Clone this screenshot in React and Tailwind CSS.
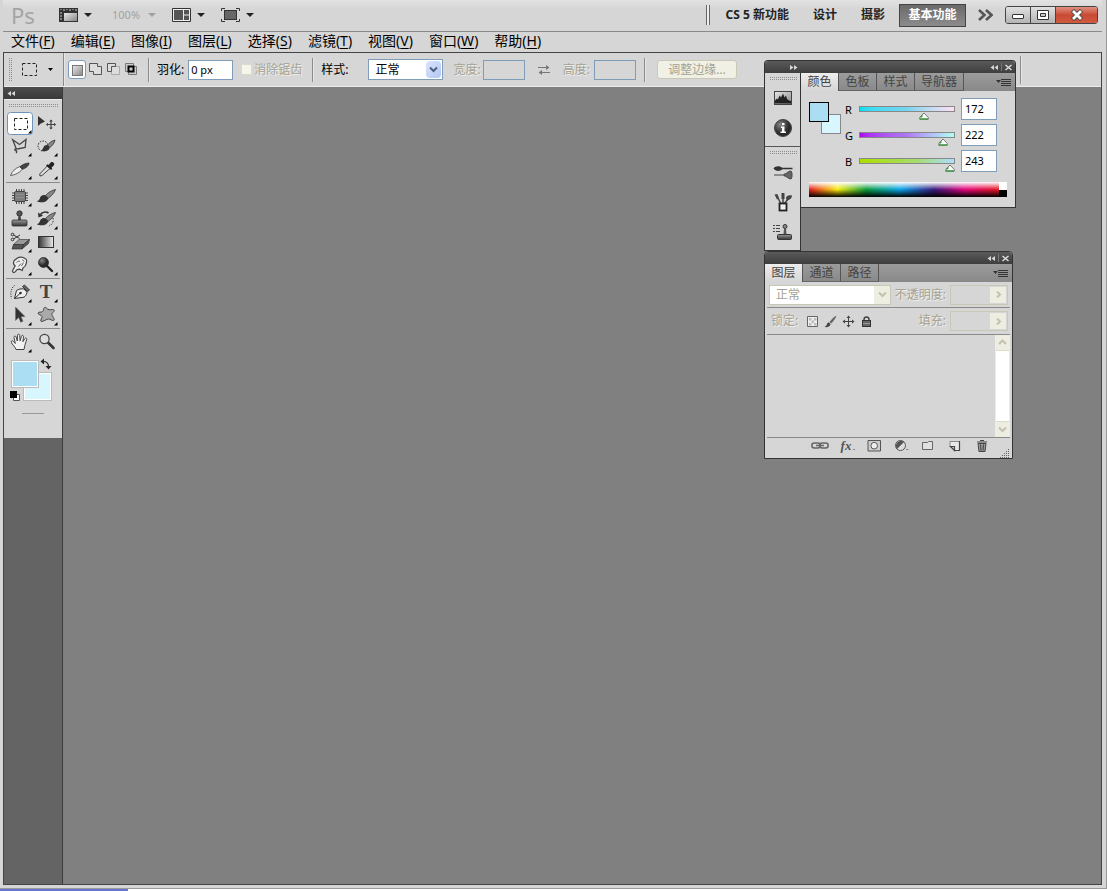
import { useState } from "react";
import clsx from "clsx";

const MENUS = [
  ["文件", "F"],
  ["编辑", "E"],
  ["图像", "I"],
  ["图层", "L"],
  ["选择", "S"],
  ["滤镜", "T"],
  ["视图", "V"],
  ["窗口", "W"],
  ["帮助", "H"],
];

/* ---------- small shared pieces ---------- */

function Caret({ className = "fill-[#222]" }) {
  return (
    <svg className={clsx("h-1 w-2 shrink-0", className)} viewBox="0 0 8 4" aria-hidden="true">
      <path d="M0 0h8L4 4z" />
    </svg>
  );
}

function Divider({ className }) {
  return <span className={clsx("w-px shrink-0 bg-[#8a8a8a] shadow-[1px_0_0_#e6e6e6]", className)} />;
}

// Dotted drag handle
function Grip({ className }) {
  return (
    <span
      className={clsx("shrink-0 bg-[conic-gradient(#8c8c8c_25%,transparent_0)] bg-[size:2px_2px]", className)}
    />
  );
}

function Chevron({ className, dir = "down" }) {
  const paths = { down: "M1 1.5l3.5 3.5L8 1.5", up: "M1 5l3.5-3.5L8 5", right: "M3 .5L6 3.5L3 6.5" };
  return (
    <svg className={clsx("h-[7px] w-[9px]", className)} viewBox="0 0 9 7" fill="none" strokeWidth="2" aria-hidden="true">
      <path d={paths[dir]} />
    </svg>
  );
}

/* ---------- brush shape, reused by several tools ---------- */

function BrushShape() {
  return (
    <g>
      <path d="M22.500 4.500c-3.500.8-7.500 3-10 6l2.800 2.700c3-2 6-5.200 7.200-8.700z" fill="#888" stroke="#333" strokeWidth=".8" />
      <path d="M12.200 10.200c-3-.6-4.700 1-5.200 2.800-.4 1.500-1.500 2.800-3.200 3.200 3.500 2 10.300 1.500 11.500-3z" fill="#333" />
    </g>
  );
}

function StampShape() {
  return (
    <g>
      <circle cx="12.500" cy="5.500" r="2.700" fill="#555" stroke="#222" strokeWidth=".7" />
      <path d="M11.500 8h2l.6 4h-3.200z" fill="#444" />
      <rect x="5" y="12" width="15" height="6" rx="1" fill="url(#metal)" stroke="#333" strokeWidth=".8" />
    </g>
  );
}

/* ---------- toolbox icons, drawn on a 26x23 cell ---------- */

const TOOL_ICONS = {
  marquee: <rect x="7.500" y="6.500" width="13" height="11" fill="none" stroke="#222" strokeDasharray="3 2" />,
  move: (
    <g>
      <path d="M5 4v10l2.500-2.300L12 9.500z" fill="#333" />
      <path d="M18 8v9M13.500 12.500h9" stroke="#444" strokeWidth="1.200" />
      <path d="M16.200 9.500L18 7.500l1.800 2zM16.200 15.500l1.800 2 1.800-2zM15 10.700l-2 1.800 2 1.800zM21 10.700l2 1.800-2 1.800z" fill="#444" />
    </g>
  ),
  lasso: (
    <g fill="none" stroke="#444" strokeWidth="1.300">
      <path d="M9.500 14.500L5.700 4.700l6.800 4.800 6.500-5-.8 8-8 1.500" />
      <path d="M9.800 14.200c-1.800-.9-3 .8-1.200 1.300 1.200.3 1.700 1.200.5 2.500" />
    </g>
  ),
  quickSelect: (
    <g>
      <circle cx="10" cy="11" r="5" fill="none" stroke="#222" strokeDasharray="1.500 1.300" />
      <path d="M22 5c-3 .8-6 3-7.500 5l2.300 2.500c2.700-2 4.700-4.500 5.200-7.500z" fill="#888" stroke="#333" strokeWidth=".8" />
      <path d="M14.500 10c-3-.2-4 1.800-4.500 3.200-.3 1-1 1.800-2.200 2 3 2 8.500 1.300 9-2.700z" fill="#333" />
    </g>
  ),
  slice: (
    <g>
      <path d="M3.500 17.500c1.500-4 5-7.500 9.200-8.800l2.600 2.600c-3 3.500-7 5.700-11.800 6.200z" fill="#eee" stroke="#555" strokeWidth=".9" />
      <path d="M13 8.500c2.500-2 5.500-3.300 9-3.500.2 2.500-2.700 5-6.500 6.300z" fill="#444" stroke="#222" strokeWidth=".6" />
    </g>
  ),
  eyedropper: (
    <g>
      <path d="M7 18l-.3-2 7.600-8 2.700 2.500-8 7z" fill="#ddd" stroke="#333" strokeWidth=".9" />
      <path d="M13 7.500l1.400-1.300 1.100.9 2.200-2.600c1.500-1.600 4.600.8 3.200 2.700l-2.400 2.500.8 1-1.200 1.300z" fill="#222" />
    </g>
  ),
  patch: (
    <g>
      <path
        d="M9.500 4v15M12 4v15M14.500 4v15M17 4v15M5 8h16M5 10.500h16M5 13h16M5 15.500h16"
        stroke="#333"
        strokeWidth=".9"
      />
      <rect x="7.500" y="6.500" width="11" height="10" rx="1.500" fill="#7c7c7c" stroke="#444" />
      <path d="M9 9.500h8M9 12.500h8" stroke="#8e8e8e" />
    </g>
  ),
  brush: <BrushShape />,
  stamp: <StampShape />,
  historyBrush: (
    <g>
      <BrushShape />
      <path d="M7.500 6.500c2-2.500 5.500-3 8-1.500" fill="none" stroke="#333" strokeWidth="1.700" />
      <path d="M5 4.500l.5 5 4.500-1.800z" fill="#333" />
      <path d="M20 10c1 3-.5 6.500-4 8" fill="none" stroke="#333" strokeDasharray="1.500 1.500" />
    </g>
  ),
  eraser: (
    <g>
      <path d="M6.500 13.500l5.500-5h10.500l-6 5z" fill="#999" stroke="#444" strokeWidth=".7" />
      <path d="M6.500 13.500l-1.500 4.500h10l1.500-4.500zM15 18l6.500-5.500 1-4-6 5z" fill="#555" stroke="#333" strokeWidth=".7" />
      <path d="M6.500 4l6 3.500M6.500 8L13 4" stroke="#333" strokeWidth="1" />
      <circle cx="5.500" cy="3.500" r="1.300" fill="none" stroke="#333" />
      <circle cx="5.500" cy="8.500" r="1.300" fill="none" stroke="#333" />
    </g>
  ),
  gradient: <rect x="5.500" y="5.500" width="15" height="11" fill="url(#ramp)" stroke="#333" />,
  smudge: (
    <g>
      <path
        d="M6.200 18.300c-.8-.4-.8-1.300-.4-2.100l2.300-4.400C6.500 10.500 6 8.500 7.300 6.500L10.500 4c2-1.300 5.500-1 7 .3 2 .6 2.500 2.500 1.900 4.500-.4 2.500-1.500 4.200-3.400 5.200l-.8 2.500-2.700-1.300-2.300.3-2.400 2.600c-.5.5-1.100.5-1.600.2z"
        fill="#ececec"
        stroke="#444"
        strokeWidth="1.200"
      />
      <path d="M9.500 8.500c1-1.200 2.200-1.700 3.500-1.200M14 9.500l-2.500 3M16.500 8.500L14.500 12M15 6c1.300 0 2 .5 2 1.500" fill="none" stroke="#666" />
    </g>
  ),
  dodge: (
    <g>
      <path d="M13.500 11.500l5.500 5.500" stroke="#222" strokeWidth="2.400" strokeLinecap="round" />
      <circle cx="10.500" cy="8.500" r="5" fill="url(#ball)" stroke="#222" strokeWidth=".7" />
    </g>
  ),
  pen: (
    <g>
      <path d="M7.500 17.500l2-8c2-1.500 5-2 7.500-1.500l3 3.200c-.5 2.500-1.500 4-3 5z" fill="#eee" stroke="#333" strokeWidth="1" />
      <path d="M7.500 17.500l5.500-5" stroke="#333" />
      <circle cx="13.500" cy="12" r="1.300" fill="#333" />
      <path d="M15.500 5.500l2-1.500 5 5-2 1.500z" fill="#666" stroke="#222" strokeWidth=".8" />
      <path d="M7.500 4.500c-3 2-4.500 7.500-3 13" fill="none" stroke="#222" strokeDasharray="1 1.300" />
    </g>
  ),
  type: (
    <text x="13" y="17" textAnchor="middle" className="fill-[#444] font-['Liberation_Serif',serif] text-[19px] font-bold">
      T
    </text>
  ),
  pathSelect: (
    <path d="M8.500 3v13.500l3.200-3 2 4.700 2.300-1-2-4.500 4-.2z" fill="#333" stroke="#666" strokeWidth=".5" />
  ),
  shape: (
    <path
      d="M11.500 3.500c1.500-1 2.500 2 4.500 2.200 2 .3 5-.9 5.300.6.2 1.500-2.800 2.700-2.500 4.200.3 2 3.500 4.500 2 5.800-1.300 1-3.500-1.500-5.500-1.300-2.300.3-6 3.300-7.300 2.300-1.300-1 1.500-3.300 1-5-.5-1.500-4.200-1.500-4-3.300.3-1.500 3.500-.3 4.700-1.500 1-1 .7-3.300 1.800-4z"
      fill="#aaa"
      stroke="#444"
    />
  ),
  hand: (
    <path
      d="M9 18.500c-.5-2.500-4-5-4.700-7.200-.4-1.500 1.200-2 2.200-.8l1.800 2L7 6.500c-.2-1.700 1.700-2 2.200-.5l1.100 4 .2-5.700c.1-1.500 2-1.500 2.200 0l.4 5.500 1.300-4.600c.4-1.400 2.200-1 2.100.5l-.6 5 1.900-3c.8-1.300 2.300-.6 1.900.8-.7 2.600-1.700 4.500-1.900 6.200l-.8 3.800z"
      fill="#f2f2f2"
      stroke="#444"
      strokeWidth="1"
    />
  ),
  zoom: (
    <g>
      <path d="M15 11.500l5.500 5.500" stroke="#333" strokeWidth="2.600" strokeLinecap="round" />
      <circle cx="11.500" cy="8" r="4.600" fill="#ddd" stroke="#444" strokeWidth="1.300" />
    </g>
  ),
};

const TOOL_GROUPS = [
  [
    ["marquee", "矩形选框工具", true],
    ["move", "移动工具", false],
    ["lasso", "多边形套索工具", true],
    ["quickSelect", "快速选择工具", true],
    ["slice", "切片工具", true],
    ["eyedropper", "吸管工具", true],
  ],
  [
    ["patch", "修补工具", true],
    ["brush", "画笔工具", true],
    ["stamp", "仿制图章工具", true],
    ["historyBrush", "历史记录画笔工具", true],
    ["eraser", "橡皮擦工具", true],
    ["gradient", "渐变工具", true],
    ["smudge", "涂抹工具", true],
    ["dodge", "减淡工具", true],
  ],
  [
    ["pen", "钢笔工具", true],
    ["type", "文字工具", true],
    ["pathSelect", "路径选择工具", true],
    ["shape", "自定形状工具", true],
  ],
  [
    ["hand", "抓手工具", true],
    ["zoom", "缩放工具", false],
  ],
];

// Gradients referenced by id from several icons
function SharedDefs() {
  return (
    <svg className="absolute h-0 w-0" aria-hidden="true">
      <defs>
        <linearGradient id="metal" x2="0" y2="1">
          <stop stopColor="#999" />
          <stop offset="1" stopColor="#333" />
        </linearGradient>
        <linearGradient id="ramp">
          <stop stopColor="#333" />
          <stop offset="1" stopColor="#eee" />
        </linearGradient>
        <radialGradient id="ball" cx=".35" cy=".3">
          <stop stopColor="#888" />
          <stop offset="1" stopColor="#2a2a2a" />
        </radialGradient>
        <linearGradient id="steel" x2="1" y2="1">
          <stop stopColor="#e8e8e8" />
          <stop offset="1" stopColor="#888" />
        </linearGradient>
      </defs>
    </svg>
  );
}

/* ---------- title bar ---------- */

function TitleBar() {
  return (
    <header className="flex h-8 items-center border-b border-[#8a8a8a] bg-gradient-to-b from-[#e2e2e2] to-[#d6d6d6] to-30% pb-px pl-2 pr-1">
      <span className="w-12 text-[22px] leading-6 text-[#a4a4a4]">Ps</span>
      <button type="button" aria-label="启动 Bridge" className="flex items-center gap-1.5">
        <svg className="h-4 w-[19px]" viewBox="0 0 19 16" aria-hidden="true">
          <path d="M0 1h19v14H0z" fill="#333" />
          <path d="M5 6h13v8H5z" fill="url(#steel)" />
          <path d="M2 2v1M5 2v2M8 2v1M11 2v2M14 2v1M17 2v2M1 6h2M1 9h2M1 12h2" stroke="#ccc" />
        </svg>
        <Caret />
      </button>
      <button type="button" disabled className="ml-5 flex items-center gap-2 text-[11px] leading-4 text-[#a2a2a2]">
        100%
        <Caret className="fill-[#a2a2a2]" />
      </button>
      <button type="button" aria-label="排列文档" className="ml-4 flex items-center gap-1.5">
        <svg className="h-4 w-[19px]" viewBox="0 0 19 16" aria-hidden="true">
          <path d="M.5 1.500h18v13H.5z" fill="#eee" stroke="#333" />
          <path d="M2 3h9v10H2zM12 3h5v4.500h-5zM12 8.500h5V13h-5z" fill="#555" />
        </svg>
        <Caret />
      </button>
      <button type="button" aria-label="屏幕模式" className="ml-4 flex items-center gap-1.5">
        <svg className="h-4 w-[19px]" viewBox="0 0 19 16" aria-hidden="true">
          <path d="M.5 4V1.500H4M15 1.500h3.500V4M18.500 12v2.500H15M4 14.500H.5V12" fill="none" stroke="#333" />
          <rect x="3.500" y="3.500" width="12" height="9" fill="#666" stroke="#333" />
        </svg>
        <Caret />
      </button>

      <nav className="ml-auto flex items-center text-xs font-bold leading-4 text-[#222]">
        <span className="h-5 w-1 border-x border-[#666] bg-[#eee]" />
        <a href="#new" className="ml-4 whitespace-nowrap">
          CS 5 新功能
        </a>
        <a href="#design" className="ml-6">
          设计
        </a>
        <a href="#photo" className="ml-6">
          摄影
        </a>
        <button
          type="button"
          className="ml-3.5 h-[23px] w-[67px] border border-[#444] bg-gradient-to-b from-[#6a6a6a] to-[#8c8c8c] text-white"
        >
          基本功能
        </button>
        <button type="button" aria-label="更多工作区" className="ml-3">
          <svg className="h-3 w-[15px]" viewBox="0 0 15 12" fill="none" stroke="#555" strokeWidth="2.600" aria-hidden="true">
            <path d="M1 1l5.500 5L1 11M8 1l5.500 5L8 11" />
          </svg>
        </button>
      </nav>

      <div className="ml-3 flex h-[18px] overflow-hidden rounded-[3px] border border-[#444]">
        <button
          type="button"
          aria-label="最小化"
          className="flex w-[25px] items-center justify-center border-r border-[#444] bg-gradient-to-b from-[#e0e0e0] to-[#b4b4b4]"
        >
          <svg className="h-4 w-4" viewBox="0 0 16 16" aria-hidden="true">
            <rect x="2.500" y="7.500" width="11" height="4" rx=".5" fill="#fff" stroke="#333" />
          </svg>
        </button>
        <button
          type="button"
          aria-label="最大化"
          className="flex w-[25px] items-center justify-center border-r border-[#444] bg-gradient-to-b from-[#e0e0e0] to-[#b4b4b4]"
        >
          <svg className="h-4 w-4" viewBox="0 0 16 16" aria-hidden="true">
            <path d="M2.500 3.500h11v9h-11zM5.500 6.500v3h5v-3z" fill="#fff" fillRule="evenodd" stroke="#333" />
          </svg>
        </button>
        <button
          type="button"
          aria-label="关闭"
          className="flex w-[41px] items-center justify-center bg-gradient-to-b from-[#e09080] via-[#c84a34] to-[#d05a40]"
        >
          <svg className="h-3 w-[14px]" viewBox="0 0 14 12" aria-hidden="true">
            <path d="M2.500 1.500l9 9M11.500 1.500l-9 9" stroke="#444" strokeWidth="4.500" />
            <path d="M3 2l8 8M11 2l-8 8" stroke="#fff" strokeWidth="2.800" />
          </svg>
        </button>
      </div>
    </header>
  );
}

/* ---------- menu bar ---------- */

function MenuBar() {
  return (
    <nav className="flex h-5 items-center gap-4 pb-0.5 pl-2 text-sm leading-4 text-black">
      {MENUS.map(([name, key]) => (
        <button key={key} type="button" className="whitespace-nowrap">
          {name}(<u className="underline-offset-2">{key}</u>)
        </button>
      ))}
    </nav>
  );
}

/* ---------- options bar ---------- */

function SelectionModes() {
  const icons = [
    <rect x="3.500" y="3.500" width="10" height="10" fill="url(#steel)" stroke="#777" />,
    <path d="M2.500 1.500h8v3h4v8h-8v-3h-4z" fill="#ddd" stroke="#555" />,
    <g>
      <path d="M6.500 4.500h8v8h-8z" fill="#ddd" stroke="#aaa" />
      <path d="M2.500 9.500v-8h8v3h-4v5z" fill="#ddd" stroke="#555" />
    </g>,
    <g>
      <path d="M2.500 1.500h8v8h-8zM5.500 4.500h8v8h-8z" fill="#ccc" stroke="#777" />
      <path d="M5.500 4.500h5v5h-5z" fill="#ccc" stroke="#000" strokeWidth="2" />
    </g>,
  ];
  const labels = ["新选区", "添加到选区", "从选区减去", "与选区交叉"];
  return (
    <div className="flex items-center">
      {icons.map((icon, i) => (
        <button
          key={labels[i]}
          type="button"
          aria-label={labels[i]}
          className={clsx(
            "flex h-[19px] w-[18px] items-center justify-center rounded-[3px] border",
            i === 0 ? "border-[#7c9cc0] bg-white" : "border-transparent"
          )}
        >
          <svg className="h-4 w-4 shrink-0" viewBox="0 0 16 16" aria-hidden="true">
            {icon}
          </svg>
        </button>
      ))}
    </div>
  );
}

function OptionsBar() {
  return (
    <div className="flex h-[34px] items-center border-b border-[#ececec] text-xs leading-4 text-black">
      <Grip className="ml-1 h-6 w-1" />
      <button type="button" aria-label="矩形选框工具预设" className="ml-2.5 flex items-center gap-2.5">
        <svg className="h-4 w-4" viewBox="0 0 16 16" aria-hidden="true">
          <rect x=".5" y="1.500" width="14" height="12" fill="none" stroke="#222" strokeDasharray="3 2" />
        </svg>
        <svg className="h-[3px] w-[5px]" viewBox="0 0 5 3" aria-hidden="true">
          <path d="M0 0h5L2.500 3z" />
        </svg>
      </button>
      <Divider className="ml-2.5 h-full" />
      <div className="ml-1">
        <SelectionModes />
      </div>
      <Divider className="ml-2 h-6" />

      <label htmlFor="feather" className="ml-2 whitespace-nowrap">
        羽化:
      </label>
      <input
        id="feather"
        defaultValue="0 px"
        className="ml-1 h-5 w-[45px] border border-[#7f9db9] bg-white px-0.5 text-[11px]"
      />

      <label className="ml-2 flex items-center gap-0.5 whitespace-nowrap text-[#a5a393] [text-shadow:1px_1px_0_#efefef]">
        <input type="checkbox" disabled className="h-[11px] w-[11px] appearance-none border border-[#dcdacb] bg-[#f6f5ec]" />
        消除锯齿
      </label>
      <Divider className="ml-2.5 h-6" />

      <label htmlFor="style" className="ml-2 whitespace-nowrap">
        样式:
      </label>
      <span className="relative ml-5">
        <select id="style" className="block h-[21px] w-[75px] appearance-none border border-[#7f9db9] bg-white pl-1.5">
          <option>正常</option>
        </select>
        <span className="pointer-events-none absolute inset-y-0.5 right-0.5 flex w-[15px] items-center justify-center rounded-sm bg-gradient-to-br from-[#dbe5fc] to-[#b2c5f3]">
          <Chevron className="stroke-[#4d6185]" />
        </span>
      </span>

      <label htmlFor="opt-w" className="ml-2.5 whitespace-nowrap text-[#a5a393] [text-shadow:1px_1px_0_#efefef]">
        宽度:
      </label>
      <input id="opt-w" disabled className="ml-0.5 h-5 w-[42px] border border-[#7f9db9]" />
      <button type="button" aria-label="高度和宽度互换" disabled className="ml-3">
        <svg className="h-3 w-[14px]" viewBox="0 0 14 12" fill="#777" stroke="#777" aria-hidden="true">
          <path d="M1 3.500h8M5 8.500h8" />
          <path d="M9 1l3.500 2.500L9 6zM5 6L1.500 8.500 5 11z" stroke="none" />
        </svg>
      </button>
      <label htmlFor="opt-h" className="ml-3 whitespace-nowrap text-[#a5a393] [text-shadow:1px_1px_0_#efefef]">
        高度:
      </label>
      <input id="opt-h" disabled className="ml-1 h-5 w-[42px] border border-[#7f9db9]" />
      <Divider className="ml-2 h-6" />
      <button
        type="button"
        disabled
        className="ml-3 h-[19px] w-20 whitespace-nowrap rounded-[3px] border border-[#cbc9b6] bg-[#f1f0e4] leading-4 text-[#a5a393]"
      >
        调整边缘…
      </button>
      <Divider className="ml-auto mr-20 h-7" />
    </div>
  );
}

/* ---------- toolbox ---------- */

function Toolbox() {
  const [active, setActive] = useState("marquee");
  return (
    <aside className="flex w-[59px] shrink-0 flex-col border-r border-[#3a3a3a] bg-[#646464]">
      <div className="flex h-3 items-center bg-gradient-to-b from-[#4c4c4c] to-[#3a3a3a] pl-[3px]">
        <DoubleArrow flip />
      </div>
      <div className="flex flex-col border-t border-[#eee] bg-[#d6d6d6] pb-6">
        <Grip className="mx-1 my-1 h-1" />
        {TOOL_GROUPS.map((group, i) => (
          <div key={i} className={clsx("mx-0.5 grid grid-cols-[26px_26px] pl-px", i > 0 && "mt-px border-t border-[#8a8a8a] pt-0.5")}>
            {group.map(([id, label, hasMore]) => (
              <button
                key={id}
                type="button"
                title={label}
                aria-label={label}
                onClick={() => setActive(id)}
                className="h-[23px]"
              >
                <svg className="block h-[23px] w-[26px]" viewBox="0 0 26 23" aria-hidden="true">
                  {active === id && <rect x=".5" y=".5" width="25" height="22" rx="3" fill="#fff" stroke="#6f95bd" />}
                  {TOOL_ICONS[id]}
                  {hasMore && <path d="M24.500 18v3.500H21z" fill="#000" />}
                </svg>
              </button>
            ))}
          </div>
        ))}
        {/* foreground / background colours overlap each other */}
        <div className="relative ml-1.5 mt-0.5 h-[45px] w-11">
          <button
            type="button"
            aria-label="背景色"
            className="absolute bottom-0 right-0.5 h-[29px] w-[29px] border border-[#bbb] bg-[#d8f6fd] outline-1 -outline-offset-2 outline-white"
          />
          <button
            type="button"
            aria-label="前景色"
            className="absolute left-px top-1 h-7 w-7 border border-[#bbb] bg-[#acdef3] outline-1 -outline-offset-2 outline-white"
          />
          <button type="button" aria-label="切换前景色和背景色" className="absolute right-0.5 top-0.5">
            <svg className="block h-3 w-3" viewBox="0 0 12 12" aria-hidden="true">
              <path d="M3 3.500c4 0 5.500 1.500 5.500 5" fill="none" stroke="#222" strokeWidth="1.200" />
              <path d="M4 .5v6L.5 3.500zM5.500 8h6l-3 3.500z" fill="#222" />
            </svg>
          </button>
          <button type="button" aria-label="默认前景色和背景色" className="absolute bottom-0 left-0">
            <svg className="block h-2.5 w-2.5" viewBox="0 0 10 10" aria-hidden="true">
              <path d="M3.500 3.500h6v6h-6z" fill="#fff" stroke="#555" />
              <path d="M0 0h7v7H0z" />
            </svg>
          </button>
        </div>
        <span className="mx-auto mt-3 h-px w-[22px] bg-[#999]" />
      </div>
    </aside>
  );
}

/* ---------- floating panels ---------- */

function DoubleArrow({ flip }) {
  return (
    <svg className={clsx("h-[5px] w-[8px]", flip && "-scale-x-100")} viewBox="0 0 8 5" fill="#d8d8d8" aria-hidden="true">
      <path d="M0 0l3.500 2.500L0 5zM4 0l3.500 2.500L4 5z" />
    </svg>
  );
}

function PanelHeader({ children }) {
  return (
    <div className="flex h-3 items-center rounded-t-[3px] bg-gradient-to-b from-[#5a5a5a] to-[#3e3e3e] pr-[3px]">
      {children}
      <button type="button" aria-label="折叠为图标" className="ml-auto">
        <DoubleArrow flip />
      </button>
      <span className="mx-[3px] h-2 w-px bg-[#777]" />
      <button type="button" aria-label="关闭面板">
        <svg className="block h-[7px] w-[7px]" viewBox="0 0 7 7" stroke="#ddd" strokeWidth="1.500" aria-hidden="true">
          <path d="M.5 1l6 5M6.500 1l-6 5" />
        </svg>
      </button>
    </div>
  );
}

function PanelTabs({ tabs }) {
  return (
    <div
      role="tablist"
      className="flex h-[18px] items-stretch bg-gradient-to-b from-[#9c9c9c] to-[#888] pr-1 text-xs leading-4 text-[#444]"
    >
      {tabs.map((tab, i) => (
        <button
          key={tab}
          type="button"
          role="tab"
          aria-selected={i === 0}
          className={clsx(
            "min-w-[38px] whitespace-nowrap border-r border-[#555] px-1.5",
            i === 0 ? "bg-gradient-to-b from-[#ededed] to-[#d6d6d6]" : "border-b border-b-[#666]"
          )}
        >
          {tab}
        </button>
      ))}
      <span className="flex flex-1 items-center justify-end">
        <button type="button" aria-label="面板菜单">
          <svg className="block h-[9px] w-[15px]" viewBox="0 0 15 9" aria-hidden="true">
            <path d="M0 2h5L2.500 5z" fill="#333" />
            <path d="M5 1.500h10M5 3.500h10M5 5.500h10M5 7.500h10" stroke="#333" />
          </svg>
        </button>
      </span>
    </div>
  );
}

const CHANNELS = [
  { id: "R", start: 172, track: "bg-gradient-to-r from-[#00def3] via-[#76d4f0] to-[#ffdef3]" },
  { id: "G", start: 222, track: "bg-gradient-to-r from-[#ac00f3] via-[#ac78f3] to-[#acfff3]" },
  { id: "B", start: 243, track: "bg-[linear-gradient(to_right,#acde00,#a5dc6e_60%,#acdeff)]" },
];

function ChannelSlider({ id, start, track }) {
  const [value, setValue] = useState(start);
  return (
    <div className="flex items-start">
      <label htmlFor={`ch-${id}`} className="w-3.5 pt-1 text-[11px] leading-4 text-black">
        {id}
      </label>
      <div className="relative mt-2 h-3.5 flex-1">
        <div className={clsx("h-1.5 border border-[#888]", track)} />
        <svg
          className="absolute top-1.5 -ml-[5px] h-2 w-[10px]"
          style={{ left: `${(value / 255) * 100}%` }}
          viewBox="0 0 10 8"
          aria-hidden="true"
        >
          <path d="M.7 7.300V5.500L5 1l4.300 4.500v1.800z" fill="#fff" stroke="#777" />
          <path d="M1 6.800h8M1.500 5.500l2-2" stroke="#2f9e35" strokeWidth="1.200" />
        </svg>
        <input
          id={`ch-${id}`}
          type="range"
          min="0"
          max="255"
          value={value}
          onChange={(e) => setValue(Number(e.target.value))}
          className="absolute inset-0 h-full w-full opacity-0"
        />
      </div>
      <input
        aria-label={`${id} 值`}
        value={value}
        onChange={(e) => setValue(Number(e.target.value) || 0)}
        className="ml-1.5 h-[22px] w-9 border border-[#7f9db9] bg-white pb-0.5 pl-[3px] text-[11px] leading-4 text-black"
      />
    </div>
  );
}

function ColorPanel() {
  return (
    <section className="min-w-0 flex-1 border-b border-r border-[#333] bg-[#d6d6d6]">
      <PanelTabs tabs={["颜色", "色板", "样式", "导航器"]} />
      <div className="px-2 pb-2.5 pt-[7px]">
        <div className="flex pr-2.5">
          <div className="relative mt-1 h-8 w-9 shrink-0">
            <span className="absolute bottom-0 right-1 h-5 w-5 border border-[#888] bg-[#d8f6fd]" />
            <span className="absolute left-0 top-0 h-5 w-5 border border-black bg-[#acdef3]" />
          </div>
          <div className="flex flex-1 flex-col gap-1">
            {CHANNELS.map((c) => (
              <ChannelSlider key={c.id} {...c} />
            ))}
          </div>
        </div>
        {/* spectrum ramp: hue left to right, white to black top to bottom */}
        <div className="mt-2.5 flex h-[15px]">
          <div className="flex-1 bg-[linear-gradient(to_bottom,#fff_0%,transparent_50%,#000_100%),linear-gradient(to_right,#e21b22,#f8ec10_15%,#0b9a3c_30%,#0aa4e8_48%,#3a1a7c_66%,#e5087e_82%,#e21b22)]" />
          <div className="w-2 bg-[linear-gradient(#fff_50%,#000_50%)]" />
        </div>
      </div>
    </section>
  );
}

const DOCK_ICONS = [
  [
    [
      "直方图",
      <g>
        <rect x="1.500" y="3.500" width="17" height="13" fill="url(#steel)" stroke="#444" />
        <path d="M2 15.500v-3l2-2 1 1 1.500-4 1.500 2 2-4 1.500 4 1.500-2 1 3.500 2 1.500 2 .5v2.500z" fill="#222" />
      </g>,
    ],
    [
      "信息",
      <g>
        <circle cx="10" cy="10" r="8.500" fill="url(#ball)" stroke="#444" />
        <path d="M8 8.500h3.500v5H13V15H7.500v-1.500H9V10H8zM9 5h2.500v2.200H9z" fill="#fff" />
      </g>,
    ],
  ],
  [
    [
      "画笔",
      <g>
        <path d="M.5 6.500c1.500-2.500 6-3.300 9-.7h10v1.400h-10c-3 2.500-7 2.300-9-.7z" fill="#333" />
        <path d="M1 13h10M11 12.200c2.500 0 3.500-3 7-3.200l1 2.200v3.600L18 17c-3.500-.2-4.500-3.200-7-3.200z" fill="#666" stroke="#444" strokeWidth="1" />
      </g>,
    ],
    [
      "画笔预设",
      <g>
        <path d="M4 4l4 8M10 3v9M16 6l-5 6" stroke="#444" strokeWidth="1.500" />
        <path d="M1.500 2.500l3-.5 1.500 4.500-2 1zM8.500 1h3v6h-3zM13 6.500c0-3 3-3.500 6-3 0 2.500-2 4.500-5 5z" fill="#444" />
        <rect x="6.500" y="11.500" width="7" height="7" fill="#eee" stroke="#222" strokeWidth="1.800" />
      </g>,
    ],
    [
      "仿制源",
      <g>
        <path d="M0 3.500h2M0 6.500h2M0 9.500h2M3 3.500h4M3 6.500h4M3 9.500h4" stroke="#444" />
        <circle cx="12" cy="4.500" r="2" fill="#888" stroke="#333" />
        <path d="M11 7h2l.5 5h-3z" fill="#555" />
        <rect x="4.500" y="12.500" width="14" height="5" rx="1" fill="url(#metal)" stroke="#333" />
      </g>,
    ],
  ],
];

function IconDock() {
  return (
    <div className="w-[37px] shrink-0 border-x border-b border-[#333] bg-[#d6d6d6]">
      {DOCK_ICONS.map((group, i) => (
        <div key={i} className={clsx("flex flex-col items-center pb-2 pt-1", i > 0 && "border-t border-[#555]")}>
          <Grip className="mb-[7px] h-1 w-7" />
          <div className="flex flex-col gap-2.5">
            {group.map(([label, icon]) => (
              <button key={label} type="button" title={label} aria-label={label}>
                <svg className="block h-5 w-5" viewBox="0 0 20 20" aria-hidden="true">
                  {icon}
                </svg>
              </button>
            ))}
          </div>
        </div>
      ))}
    </div>
  );
}

function PercentField({ id, label }) {
  return (
    <>
      <label htmlFor={id} className="ml-auto whitespace-nowrap">
        {label}
      </label>
      <span className="ml-1 flex h-5 w-[58px] shrink-0 border border-[#c9c8b4] p-px">
        <input id={id} disabled className="min-w-0 flex-1" />
        <span className="flex w-4 items-center justify-center bg-[#eeede1]">
          <Chevron dir="right" className="stroke-[#c4c2ae]" />
        </span>
      </span>
    </>
  );
}

const LOCK_ICONS = [
  [
    "锁定透明像素",
    <g>
      <path d="M1.500 1.500h10v10h-10z" fill="#eee" stroke="#666" />
      <path d="M3 3h2.500v2.500H3zM8 3h2.500v2.500H8zM5.500 5.500H8V8H5.500zM3 8h2.500v2.500H3zM8 8h2.500v2.500H8z" fill="#bbb" />
    </g>,
  ],
  [
    "锁定图像像素",
    <g>
      <path d="M12.500.5C9 2.500 7 5 5.500 7l1.700 1.500C9 6.500 11.500 4 12.500.5z" fill="#666" />
      <path d="M5 7.500C3 7.500 3 9 2.500 10.500L.5 12c3 .5 6-.5 6-3z" fill="#444" />
    </g>,
  ],
  [
    "锁定位置",
    <g>
      <path d="M6.500 2v9M2 6.500h9" stroke="#444" />
      <path d="M4.500 3l2-2.500 2 2.500zM4.500 10l2 2.500 2-2.500zM3 4.500L.5 6.500l2.500 2zM10 4.500l2.500 2-2.500 2z" fill="#444" />
    </g>,
  ],
  [
    "锁定全部",
    <g>
      <path d="M4 6V4.500c0-3.500 5-3.500 5 0V6" fill="none" stroke="#444" strokeWidth="1.500" />
      <rect x="2.500" y="5.500" width="8" height="6" fill="#666" stroke="#333" />
      <path d="M3 8.500h7" stroke="#999" />
    </g>,
  ],
];

const LAYER_ACTIONS = [
  [
    "链接图层",
    <g fill="none" stroke="#666" strokeWidth="1.500">
      <rect x=".8" y="5" width="8.500" height="5" rx="2.500" />
      <rect x="8.700" y="5" width="8.500" height="5" rx="2.500" />
      <path d="M5 7.500h8" />
    </g>,
  ],
  [
    "添加图层样式",
    <g>
      <text x="8" y="12" textAnchor="middle" className="fill-[#555] font-['Liberation_Serif',serif] text-[13px] font-bold italic">
        fx
      </text>
      <path d="M15 11.500h2" stroke="#888" />
    </g>,
  ],
  [
    "添加图层蒙版",
    <g>
      <path d="M3 2.500h12.500v10.500H3z" fill="#ccc" stroke="#555" />
      <circle cx="9.200" cy="7.700" r="3.300" fill="#eee" stroke="#555" />
    </g>,
  ],
  [
    "创建新的填充或调整图层",
    <g>
      <circle cx="8.500" cy="7.500" r="5" fill="#ddd" stroke="#555" />
      <path d="M5 11A5 5 0 0 1 12 4z" fill="#555" />
      <path d="M14 11.500h2.500" stroke="#888" />
    </g>,
  ],
  ["创建新组", <path d="M3.500 4.500h5l1-1h4v8h-10z" fill="#e0e0e0" stroke="#666" />],
  [
    "创建新图层",
    <g>
      <path d="M4 3.500h9.500v9H8.500v-4H4z" fill="#e8e8e8" stroke="#888" />
      <path d="M13.500 3v9.500h-5M4.500 8.500h4v4z" fill="none" stroke="#444" strokeWidth="1.200" />
    </g>,
  ],
  [
    "删除图层",
    <g>
      <path d="M5 5.500h8L12 13.500H6z" fill="#999" stroke="#444" />
      <path d="M4 4h10M7 2.500h4M7.500 6.500l.5 6M10.500 6.500l-.5 6" stroke="#444" />
    </g>,
  ],
];

function LayersPanel() {
  return (
    <section className="w-[249px] rounded-t border border-[#333] bg-[#d6d6d6]">
      <PanelHeader />
      <PanelTabs tabs={["图层", "通道", "路径"]} />
      <div className="px-0.5 text-xs leading-4 text-[#a5a393] [text-shadow:1px_1px_0_#efefef]">
        <div className="flex h-[26px] items-center border-b border-[#8a8a8a] px-0.5">
          <span className="relative">
            <select
              aria-label="混合模式"
              disabled
              className="block h-5 w-[122px] appearance-none border border-[#c9c8b4] bg-white pl-1.5 text-[#a5a393] opacity-100"
            >
              <option>正常</option>
            </select>
            <span className="pointer-events-none absolute inset-y-px right-px flex w-4 items-center justify-center bg-[#eeede1]">
              <Chevron className="stroke-[#c4c2ae]" />
            </span>
          </span>
          <PercentField id="opacity" label="不透明度:" />
        </div>
        <div className="flex h-[27px] items-center border-b border-[#8a8a8a] px-0.5">
          <span className="w-[37px] pl-0.5">锁定:</span>
          <span className="flex gap-[5px]">
            {LOCK_ICONS.map(([label, icon]) => (
              <button key={label} type="button" aria-label={label} disabled>
                <svg className="block h-[13px] w-[13px]" viewBox="0 0 13 13" aria-hidden="true">
                  {icon}
                </svg>
              </button>
            ))}
          </span>
          <PercentField id="fill" label="填充:" />
        </div>
        <div className="flex h-[103px] justify-end border-b border-[#8a8a8a]">
          <div className="flex w-[15px] flex-col justify-between border-x border-[#eeede1] bg-white">
            <button
              type="button"
              aria-label="向上滚动"
              disabled
              className="flex h-4 items-center justify-center border-b border-[#dddccb] bg-[#eeede1]"
            >
              <Chevron dir="up" className="stroke-[#c4c2ae]" />
            </button>
            <button
              type="button"
              aria-label="向下滚动"
              disabled
              className="flex h-4 items-center justify-center border-t border-[#dddccb] bg-[#eeede1]"
            >
              <Chevron className="stroke-[#c4c2ae]" />
            </button>
          </div>
        </div>
        <div className="flex h-5 justify-end gap-[9px]">
          {LAYER_ACTIONS.map(([label, icon]) => (
            <button key={label} type="button" aria-label={label} disabled className="self-start">
              <svg className="block h-4 w-[18px] overflow-visible" viewBox="0 0 18 16" aria-hidden="true">
                {icon}
              </svg>
            </button>
          ))}
          <svg className="h-2.5 w-2.5 self-end" viewBox="0 0 10 10" aria-hidden="true">
            <path d="M8 1h1v1H8zM6 3h1v1H6zM8 3h1v1H8zM4 5h1v1H4zM6 5h1v1H6zM8 5h1v1H8zM2 7h1v1H2zM4 7h1v1H4zM6 7h1v1H6zM8 7h1v1H8zM0 9h1v1H0zM2 9h1v1H2zM4 9h1v1H4zM6 9h1v1H6zM8 9h1v1H8z" fill="#666" />
          </svg>
        </div>
      </div>
    </section>
  );
}

/* ---------- page ---------- */

export default function App() {
  return (
    <div className="flex min-h-screen flex-col bg-white font-['Noto_Sans','Noto_Sans_CJK_SC',sans-serif]">
      <SharedDefs />
      <div className="relative flex flex-1 flex-col border-b border-r border-[#999] bg-[#d6d6d6] pb-[3px] pl-[3px] pr-1">
        <TitleBar />
        <MenuBar />
        <div className="flex flex-1 flex-col border border-[#444]">
          <OptionsBar />
          <main className="flex flex-1 bg-[#808080]">
            <Toolbox />
          </main>
        </div>

        {/* floating panels sit over the options bar and canvas */}
        <div className="absolute right-[90px] top-[60px] w-[252px]">
          <div className="rounded-t border-x border-t border-[#333]">
            <PanelHeader>
              <button type="button" aria-label="展开面板" className="ml-[25px]">
                <DoubleArrow />
              </button>
            </PanelHeader>
          </div>
          <div className="flex items-start">
            <IconDock />
            <ColorPanel />
          </div>
          <LayersPanel />
        </div>
      </div>
      <div className="flex h-0.5">
        <span className="w-32 bg-[#6676cf]" />
      </div>
    </div>
  );
}
